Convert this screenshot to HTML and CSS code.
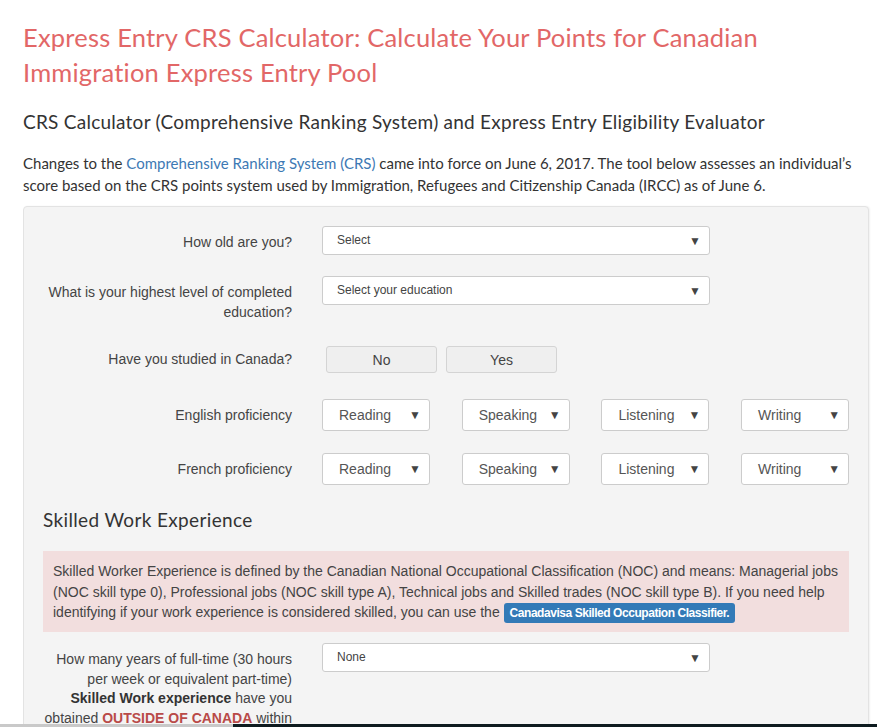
FILE: index.html
```html
<!DOCTYPE html>
<html lang="en">
<head>
<meta charset="utf-8">
<title>Express Entry CRS Calculator</title>
<link rel="stylesheet" href="styles.css">
</head>
<body>
<div class="page">
  <h1 class="title">Express Entry CRS Calculator: Calculate Your Points for Canadian Immigration Express Entry Pool</h1>
  <h2 class="subtitle">CRS Calculator (Comprehensive Ranking System) and Express Entry Eligibility Evaluator</h2>
  <p class="intro">Changes to the <a href="#" class="link">Comprehensive Ranking System (CRS)</a> came into force on June 6, 2017. The tool below assesses an individual’s score based on the CRS points system used by Immigration, Refugees and Citizenship Canada (IRCC) as of June 6.</p>

  <div class="panel">
    <div class="row row-age">
      <div class="label">How old are you?</div>
      <div class="control"><div class="select wide"><span>Select</span><span class="arrow">▼</span></div></div>
    </div>
    <div class="row row-edu">
      <div class="label">What is your highest level of completed education?</div>
      <div class="control"><div class="select wide"><span>Select your education</span><span class="arrow">▼</span></div></div>
    </div>
    <div class="row row-study">
      <div class="label">Have you studied in Canada?</div>
      <div class="control buttons"><button class="btn">No</button><button class="btn">Yes</button></div>
    </div>
    <div class="row row-lang">
      <div class="label">English proficiency</div>
      <div class="control langs">
        <div class="select small"><span>Reading</span><span class="arrow">▼</span></div>
        <div class="select small"><span>Speaking</span><span class="arrow">▼</span></div>
        <div class="select small"><span>Listening</span><span class="arrow">▼</span></div>
        <div class="select small"><span>Writing</span><span class="arrow">▼</span></div>
      </div>
    </div>
    <div class="row row-lang2">
      <div class="label">French proficiency</div>
      <div class="control langs">
        <div class="select small"><span>Reading</span><span class="arrow">▼</span></div>
        <div class="select small"><span>Speaking</span><span class="arrow">▼</span></div>
        <div class="select small"><span>Listening</span><span class="arrow">▼</span></div>
        <div class="select small"><span>Writing</span><span class="arrow">▼</span></div>
      </div>
    </div>

    <h3 class="section">Skilled Work Experience</h3>
    <div class="alert">Skilled Worker Experience is defined by the Canadian National Occupational Classification (NOC) and means: Managerial jobs (NOC skill type 0), Professional jobs (NOC skill type A), Technical jobs and Skilled trades (NOC skill type B). If you need help identifying if your work experience is considered skilled, you can use the <a href="#" class="badge">Canadavisa Skilled Occupation Classifier.</a></div>

    <div class="row row-work">
      <div class="label tall">How many years of full-time (30 hours per week or equivalent part-time) <b>Skilled Work experience</b> have you obtained <b class="red">OUTSIDE OF CANADA</b> within the last 10 years?</div>
      <div class="control"><div class="select wide"><span>None</span><span class="arrow">▼</span></div></div>
    </div>
  </div>
</div>
<div class="taskbar"></div>
</body>
</html>
```

FILE: styles.css
```css
* { box-sizing: border-box; }
html, body { margin: 0; padding: 0; background: #fff; }
body { font-family: "Lato", "Open Sans", sans-serif; color: #333; overflow: hidden; height: 727px; }

.page { padding: 0 8px 0 23px; }

.title {
  margin: 20px 0 0;
  font-family: "Lato", sans-serif;
  font-weight: 400;
  font-size: 25.5px;
  line-height: 35px;
  color: #e26767;
  letter-spacing: 0.2px;
  max-width: 780px;
}
.subtitle {
  margin: 20px 0 0;
  font-family: "Lato", sans-serif;
  font-weight: 400;
  font-size: 19px;
  line-height: 24px;
  letter-spacing: 0.25px;
  color: #333;
}
.intro {
  margin: 18px 0 0;
  font-family: "Lato", sans-serif;
  font-size: 15px;
  line-height: 22px;
  letter-spacing: 0;
  color: #333;
  max-width: 846px;
}
.link { color: #3d79b4; text-decoration: none; }

.panel {
  margin-top: 10px;
  width: 846px;
  background: #f4f4f4;
  border: 1px solid #e3e3e3;
  border-radius: 4px;
  padding: 19px 19px 40px;
  box-shadow: 1px 0 2px rgba(0,0,0,0.06);
  font-family: "Liberation Sans", Arial, sans-serif;
}

.row { display: grid; grid-template-columns: 249px 1fr; column-gap: 30px; align-items: start; }
.label { text-align: right; font-size: 14px; line-height: 20px; color: #444; padding-top: 6px; }
.label.tall { line-height: 19.5px; padding-top: 7px; }
.label b { color: #333; }
.label b.red { color: #b94a48; }

.row-edu { margin-top: 21px; }
.row-study { margin-top: 21px; }
.row-lang { margin-top: 26px; }
.row-lang2 { margin-top: 22px; }
.row-lang .label, .row-lang2 .label { padding-top: 6px; }
.row-work { margin-top: 11px; }

.select {
  display: flex; align-items: center; justify-content: space-between;
  background: #fff;
  border: 1px solid #ccc;
  border-radius: 3px;
  color: #444;
}
.select.wide { width: 388px; height: 29px; font-size: 12px; padding: 0 8px 0 14px; }
.select.wide span:first-child { position: relative; top: -1px; }
.select.small { width: 108px; height: 32px; font-size: 14px; padding: 0 8px 0 16px; color: #555; }
.arrow { font-size: 12px; color: #444; line-height: 1; }

.buttons { display: flex; gap: 9px; padding: 3px 0 0 4px; }
.btn {
  width: 111px; height: 27px;
  background: #efefef;
  border: 1px solid #d4d4d4;
  border-radius: 3px;
  font-family: "Liberation Sans", Arial, sans-serif;
  font-size: 14px;
  color: #444;
  padding: 0;
}

.langs { display: flex; gap: 31.7px; }

.section {
  margin: 23px 0 0;
  font-family: "Lato", sans-serif;
  font-weight: 400;
  font-size: 19px;
  line-height: 24px;
  letter-spacing: 0.35px;
  color: #333;
}

.alert {
  margin-top: 19px;
  background: #f2dede;
  padding: 10px 10px 9px;
  font-size: 14px;
  line-height: 20.5px;
  color: #444;
}
.badge {
  display: inline-block;
  background: #337ab7;
  color: #fff;
  text-decoration: none;
  font-size: 12px;
  font-weight: bold;
  line-height: 20px;
  padding: 0 6px;
  border-radius: 3px;
  letter-spacing: -0.45px;
}

.taskbar {
  position: fixed; left: 0; right: 0; bottom: 0; height: 3px;
  background: linear-gradient(to right, #c9c9c9 0, #c9c9c9 233px, #0e1b1f 233px);
}
```
